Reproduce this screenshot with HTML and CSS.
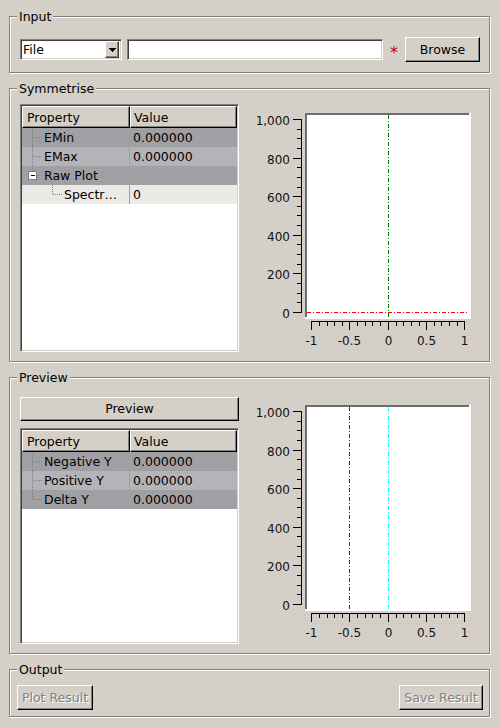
FILE: index.html
```html
<!DOCTYPE html>
<html>
<head>
<meta charset="utf-8">
<link rel="stylesheet" href="styles.css">
</head>
<body>
<div class="window">
  <section class="group group-input">
    <span class="group-title">Input</span>
    <div class="input-row">
      <div class="combo">
        <span class="combo-text">File</span>
        <span class="combo-btn"><svg class="arrow" width="7" height="4" viewBox="0 0 7 4"><path d="M0 0h7v1h-1v1h-1v1h-1v1h-1v-1h-1v-1h-1v-1h-1z"/></svg></span>
      </div>
      <div class="lineedit"></div>
      <span class="required">*</span>
      <button class="btn btn-browse">Browse</button>
    </div>
  </section>

  <section class="group group-sym">
    <span class="group-title">Symmetrise</span>
    <div class="panel-row">
      <div class="tree tree-sym">
        <div class="tree-header"><div class="hcell hc1">Property</div><div class="hcell hc2">Value</div></div>
        <div class="row r-dark">
          <div class="cell c1"><svg class="branch" width="22" height="19"><path class="dot" d="M10.5 0V19M11 9.5H20"/></svg><span>EMin</span></div>
          <div class="cell c2">0.000000</div>
        </div>
        <div class="row r-mid">
          <div class="cell c1"><svg class="branch" width="22" height="19"><path class="dot" d="M10.5 0V19M11 9.5H20"/></svg><span>EMax</span></div>
          <div class="cell c2">0.000000</div>
        </div>
        <div class="row r-dark">
          <div class="cell c1"><svg class="branch" width="22" height="19"><path class="dot" d="M10.5 0V5M15 9.5H20"/><rect class="box" x="6.5" y="5.5" width="8" height="8"/><path class="minus" d="M8.5 9.5H12.5"/></svg><span>Raw Plot</span></div>
          <div class="cell c2"></div>
        </div>
        <div class="row r-light">
          <div class="cell c1"><svg class="branch" width="42" height="19"><path class="dot" d="M30.5 0V9.5M31 9.5H40"/></svg><span>Spectr…</span></div>
          <div class="cell c2">0</div>
        </div>
      </div>
      <svg class="plot plot-sym" width="237" height="247" viewBox="0 0 237 247">
        <rect x="62" y="8" width="166" height="206" fill="#fff"/>
        <rect x="62" y="8" width="164" height="2" fill="#6d6d6d"/>
        <rect x="62" y="8" width="2" height="204" fill="#6d6d6d"/>
        <path class="axis" d="M58.5 14V208M50 14.5h9M50 53.5h9M50 91.5h9M50 130.5h9M50 168.5h9M50 207.5h9M54 24.5h5M54 33.5h5M54 43.5h5M54 62.5h5M54 72.5h5M54 82.5h5M54 101.5h5M54 110.5h5M54 120.5h5M54 139.5h5M54 149.5h5M54 159.5h5M54 178.5h5M54 188.5h5M54 197.5h5"/>
        <path class="axis" d="M68 216.5H222M68.5 216v9M106.5 216v9M145.5 216v9M183.5 216v9M221.5 216v9M76.5 216v5M84.5 216v5M91.5 216v5M99.5 216v5M114.5 216v5M122.5 216v5M129.5 216v5M137.5 216v5M153.5 216v5M160.5 216v5M168.5 216v5M176.5 216v5M191.5 216v5M198.5 216v5M206.5 216v5M214.5 216v5"/>
        <text class="ylab" x="47" y="19.5">1,000</text>
        <text class="ylab" x="47" y="58.5">800</text>
        <text class="ylab" x="47" y="96.5">600</text>
        <text class="ylab" x="47" y="135.5">400</text>
        <text class="ylab" x="47" y="173.5">200</text>
        <text class="ylab" x="47" y="212.5">0</text>
        <text class="xlab" x="68.5" y="239.5">-1</text>
        <text class="xlab" x="106.5" y="239.5">-0.5</text>
        <text class="xlab" x="145.5" y="239.5">0</text>
        <text class="xlab" x="183.5" y="239.5">0.5</text>
        <text class="xlab" x="221.5" y="239.5">1</text>
        <path class="curve c-green" d="M145.5 10V212"/>
        <path class="curve c-red" d="M64 207.5H224"/>
      </svg>
    </div>
  </section>

  <section class="group group-preview">
    <span class="group-title">Preview</span>
    <div class="panel-row">
      <div class="left-col">
        <button class="btn btn-preview">Preview</button>
        <div class="tree tree-preview">
          <div class="tree-header"><div class="hcell hc1">Property</div><div class="hcell hc2">Value</div></div>
          <div class="row r-dark">
            <div class="cell c1"><svg class="branch" width="22" height="19"><path class="dot" d="M10.5 0V19M11 9.5H20"/></svg><span>Negative Y</span></div>
            <div class="cell c2">0.000000</div>
          </div>
          <div class="row r-mid">
            <div class="cell c1"><svg class="branch" width="22" height="19"><path class="dot" d="M10.5 0V19M11 9.5H20"/></svg><span>Positive Y</span></div>
            <div class="cell c2">0.000000</div>
          </div>
          <div class="row r-dark">
            <div class="cell c1"><svg class="branch" width="22" height="19"><path class="dot" d="M10.5 0V9.5M11 9.5H20"/></svg><span>Delta Y</span></div>
            <div class="cell c2">0.000000</div>
          </div>
        </div>
      </div>
      <svg class="plot" width="237" height="247" viewBox="0 0 237 247">
        <rect x="62" y="8" width="166" height="206" fill="#fff"/>
        <rect x="62" y="8" width="164" height="2" fill="#6d6d6d"/>
        <rect x="62" y="8" width="2" height="204" fill="#6d6d6d"/>
        <path class="axis" d="M58.5 14V208M50 14.5h9M50 53.5h9M50 91.5h9M50 130.5h9M50 168.5h9M50 207.5h9M54 24.5h5M54 33.5h5M54 43.5h5M54 62.5h5M54 72.5h5M54 82.5h5M54 101.5h5M54 110.5h5M54 120.5h5M54 139.5h5M54 149.5h5M54 159.5h5M54 178.5h5M54 188.5h5M54 197.5h5"/>
        <path class="axis" d="M68 216.5H222M68.5 216v9M106.5 216v9M145.5 216v9M183.5 216v9M221.5 216v9M76.5 216v5M84.5 216v5M91.5 216v5M99.5 216v5M114.5 216v5M122.5 216v5M129.5 216v5M137.5 216v5M153.5 216v5M160.5 216v5M168.5 216v5M176.5 216v5M191.5 216v5M198.5 216v5M206.5 216v5M214.5 216v5"/>
        <text class="ylab" x="47" y="19.5">1,000</text>
        <text class="ylab" x="47" y="58.5">800</text>
        <text class="ylab" x="47" y="96.5">600</text>
        <text class="ylab" x="47" y="135.5">400</text>
        <text class="ylab" x="47" y="173.5">200</text>
        <text class="ylab" x="47" y="212.5">0</text>
        <text class="xlab" x="68.5" y="239.5">-1</text>
        <text class="xlab" x="106.5" y="239.5">-0.5</text>
        <text class="xlab" x="145.5" y="239.5">0</text>
        <text class="xlab" x="183.5" y="239.5">0.5</text>
        <text class="xlab" x="221.5" y="239.5">1</text>
        <path class="curve c-dkgreen" d="M106.5 10V212"/>
        <path class="curve c-cyan" d="M145.5 10V212"/>
      </svg>
    </div>
  </section>

  <section class="group group-output">
    <span class="group-title">Output</span>
    <button class="btn btn-disabled btn-plot">Plot Result</button>
    <button class="btn btn-disabled btn-save">Save Result</button>
  </section>
</div>
</body>
</html>
```

FILE: styles.css
```css
* { box-sizing: border-box; }
html, body { margin: 0; padding: 0; }
body {
  width: 500px;
  height: 727px;
  overflow: hidden;
  background: #d4d0c8;
  font-family: "DejaVu Sans", sans-serif;
  font-size: 12.5px;
  color: #000;
}
.window {
  display: flex;
  flex-direction: column;
  gap: 15px;
  padding: 16px 0 0 9px;
  width: 500px;
}
.group {
  position: relative;
  width: 481px;
  border: 1px solid #808080;
  box-shadow: inset 1px 1px 0 #fff, 1px 1px 0 #fff;
}
.group-title {
  position: absolute;
  left: 7px;
  top: -7px;
  padding: 0 2px;
  line-height: 14px;
  background: #d4d0c8;
}

/* Input */
.group-input { height: 57px; padding: 20px 9px 10px 10px; }
.input-row { display: flex; align-items: center; height: 25px; }
.combo {
  display: flex;
  align-items: stretch;
  width: 102px;
  height: 21px;
  margin-right: 5px;
  background: #fff;
  border: 1px solid;
  border-color: #808080 #fff #fff #808080;
  box-shadow: inset 1px 1px 0 #404040, inset -1px -1px 0 #d4d0c8;
}
.combo-text { flex: 1; padding-left: 2px; line-height: 19px; }
.combo-btn {
  display: flex;
  align-items: center;
  justify-content: center;
  width: 14px;
  margin: 1px 2px 1px 0;
  background: #d4d0c8;
  border: 1px solid;
  border-color: #fff #404040 #404040 #fff;
  box-shadow: inset -1px -1px 0 #808080;
}
.arrow { display: block; fill: #000; }
.lineedit {
  width: 256px;
  height: 21px;
  background: #fff;
  border: 1px solid;
  border-color: #808080 #fff #fff #808080;
  box-shadow: inset 1px 1px 0 #404040, inset -1px -1px 0 #d4d0c8;
}
.required {
  align-self: flex-start;
  width: 22px;
  margin-top: 8px;
  text-align: center;
  color: #c00000;
  font-size: 16px;
  line-height: 16px;
}
.btn {
  font: inherit;
  color: #000;
  background: #d4d0c8;
  border: 1px solid;
  border-color: #fff #000 #000 #fff;
  box-shadow: inset -1px -1px 0 #808080;
  padding: 0 0 1px 0;
  margin: 0;
  text-align: center;
}
.btn-browse { width: 75px; height: 25px; }

/* Panels */
.group-sym { height: 274px; padding: 15px 8px 9px 10px; }
.group-preview { height: 277px; padding: 19px 8px 9px 10px; }
.panel-row { display: flex; align-items: flex-start; gap: 4px; }
.left-col { display: flex; flex-direction: column; gap: 7px; width: 219px; }
.btn-preview { width: 219px; height: 24px; }

.tree {
  display: flex;
  flex-direction: column;
  width: 219px;
  padding: 1px;
  background: #fff;
  border: 1px solid;
  border-color: #808080 #fff #fff #808080;
  box-shadow: inset 1px 1px 0 #404040, inset -1px -1px 0 #d4d0c8;
}
.tree-sym { height: 248px; }
.tree-preview { height: 216px; }
.tree-header { display: flex; height: 22px; }
.hcell {
  height: 22px;
  line-height: 21px;
  padding-left: 4px;
  background: #d4d0c8;
  border: 1px solid;
  border-color: #fff #000 #000 #fff;
  box-shadow: inset -1px -1px 0 #808080;
  white-space: nowrap;
}
.hc1 { width: 108px; }
.hc2 { flex: 1; padding-left: 3px; }
.row { display: flex; height: 19px; line-height: 19px; }
.r-dark { background: #a0a0a4; }
.r-mid { background: #b4b4b8; }
.r-light { background: #eceae6; }
.cell { white-space: nowrap; overflow: hidden; }
.c1 {
  display: flex;
  align-items: center;
  width: 108px;
  border-right: 1px solid #a0a0a4;
}
.c2 { flex: 1; padding-left: 3px; }
.branch { display: block; flex: none; }
.branch .dot { stroke: #808080; stroke-width: 1; stroke-dasharray: 1 1; fill: none; shape-rendering: crispEdges; }
.branch .box { stroke: #808080; fill: #fff; shape-rendering: crispEdges; }
.branch .minus { stroke: #000; shape-rendering: crispEdges; }

/* Plots */
.plot { display: block; flex: none; }
.plot-sym { margin-top: 1px; }
.plot .axis { stroke: #000; stroke-width: 1; fill: none; shape-rendering: crispEdges; }
.plot text { font-family: "DejaVu Sans", sans-serif; font-size: 12px; fill: #111; }
.plot .ylab { text-anchor: end; }
.plot .xlab { text-anchor: middle; }
.plot .curve { fill: none; stroke-width: 1; stroke-dasharray: 4 2 1 2; shape-rendering: crispEdges; }
.c-green { stroke: #008000; }
.c-red { stroke: #ff0000; }
.c-dkgreen { stroke: #006400; }
.c-cyan { stroke: #00ffff; }

/* Output */
.group-output {
  display: flex;
  justify-content: space-between;
  align-items: flex-start;
  height: 48px;
  padding: 15px 6px 6px 7px;
}
.btn-disabled { color: #808080; text-shadow: 1px 1px 0 #fff; height: 25px; }
.btn-plot { width: 76px; }
.btn-save { width: 84px; }
```
